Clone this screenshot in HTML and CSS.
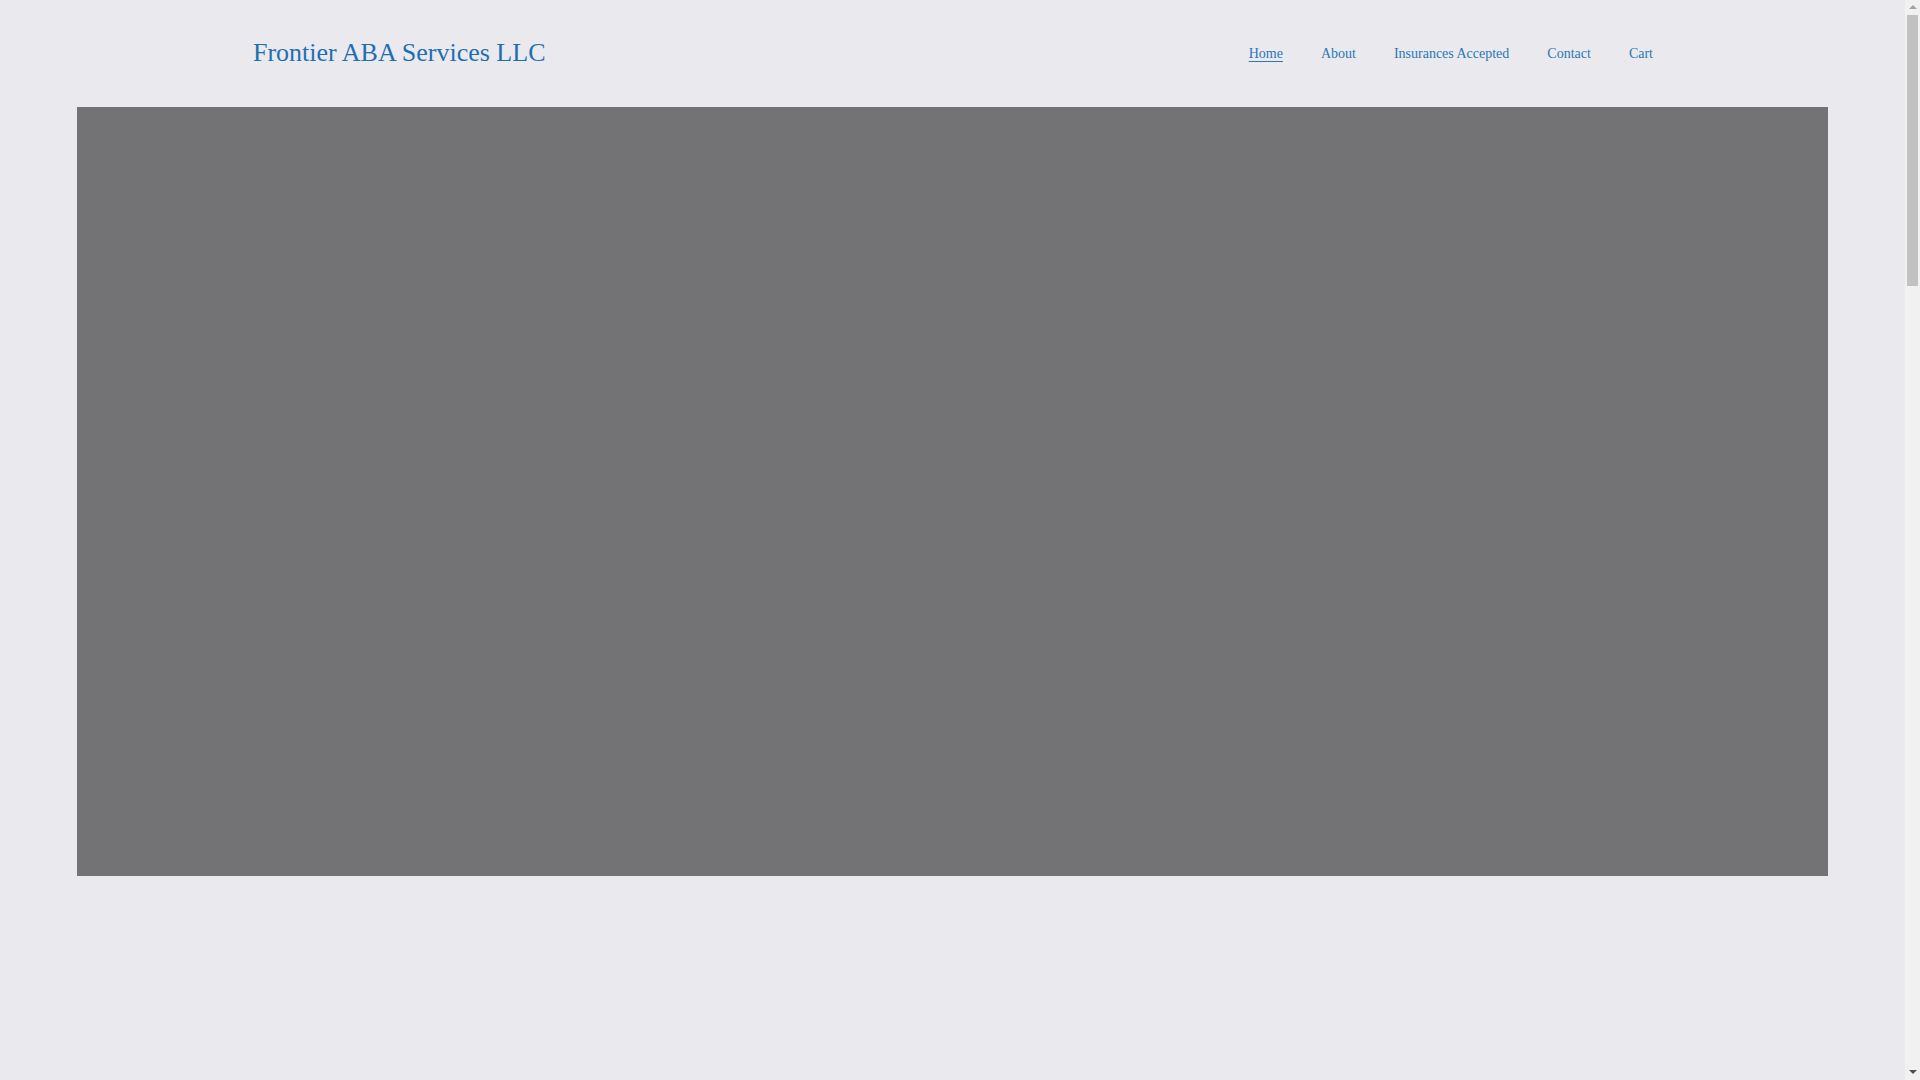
FILE: index.html
```html
<!DOCTYPE html>
<html lang="en">
<head>
<meta charset="utf-8">
<title>Frontier ABA Services LLC</title>
<link rel="stylesheet" href="styles.css">
</head>
<body>
<header class="site-header">
  <a class="site-title" href="#">Frontier ABA Services LLC</a>
  <nav class="site-nav">
    <a class="nav-link active" href="#">Home</a>
    <a class="nav-link" href="#">About</a>
    <a class="nav-link" href="#">Insurances Accepted</a>
    <a class="nav-link" href="#">Contact</a>
    <a class="nav-link" href="#">Cart</a>
  </nav>
</header>
<main class="content">
  <section class="hero"></section>
  <section class="below"></section>
</main>
<div class="scrollbar" aria-hidden="true">
  <span class="arrow arrow-up"></span>
  <span class="thumb"></span>
  <span class="arrow arrow-down"></span>
</div>
</body>
</html>
```
FILE: styles.css
```css
html, body {
  margin: 0;
  padding: 0;
}
html {
  scrollbar-width: none;
}
body {
  background: #eae9ee;
  font-family: "Liberation Serif", "Times New Roman", serif;
  color: #1f6fb0;
  margin-right: 15px;
}
.site-header {
  height: 107px;
  display: flex;
  align-items: center;
  justify-content: space-between;
  padding: 0 252px 0 253px;
  box-sizing: border-box;
}
.site-title {
  font-size: 26px;
  color: #1f6fb0;
  text-decoration: none;
  margin-top: -2px;
}
.site-nav {
  display: flex;
  gap: 38px;
  margin-top: 1px;
}
.nav-link {
  font-size: 14px;
  color: #2a77b6;
  text-decoration: none;
}
.nav-link.active {
  text-decoration: underline;
  text-underline-offset: 3px;
}
.content {
  padding: 0 77px;
}
.hero {
  height: 769px;
  background: #737375;
}
.below {
  height: 3300px;
}
.scrollbar {
  position: fixed;
  top: 0;
  right: 0;
  width: 15px;
  height: 100vh;
  background: #f1f1f1;
  display: flex;
  flex-direction: column;
  align-items: center;
}
.arrow {
  width: 0;
  height: 0;
  border-left: 4px solid transparent;
  border-right: 4px solid transparent;
  flex: none;
}
.arrow-up {
  border-bottom: 4px solid #a3a3a3;
  margin-top: 5px;
  margin-bottom: 6px;
}
.arrow-down {
  border-top: 4px solid #505050;
  margin-top: auto;
  margin-bottom: 6px;
}
.thumb {
  width: 11px;
  height: 271px;
  background: #c1c1c1;
  flex: none;
}
```
